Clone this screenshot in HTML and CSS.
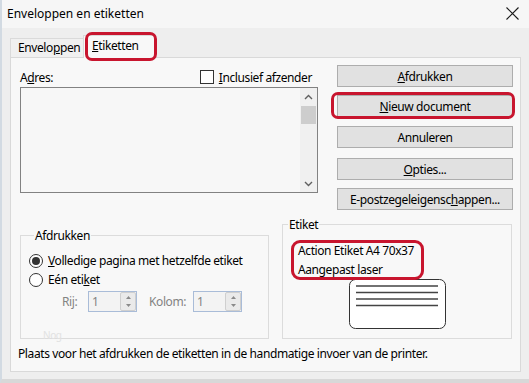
FILE: index.html
```html
<!DOCTYPE html>
<html lang="nl">
<head>
    <meta charset="UTF-8">
    <title>Enveloppen en etiketten</title>
    <link rel="stylesheet" href="styles.css">
</head>
<body>
    <div class="dialog">
        <!-- titelbalk -->
        <div class="titlebar">
            <span class="title">Enveloppen en etiketten</span>
            <svg class="close" width="13" height="13" viewBox="0 0 13 13">
                <path d="M0.5 0.5 L12.5 12.5 M12.5 0.5 L0.5 12.5" stroke="#1a1a1a" stroke-width="1.1" fill="none"/>
            </svg>
        </div>

        <!-- tabbladen -->
        <div class="tabs">
            <div class="tab">Envelo<u>p</u>pen</div>
            <div class="tab tab-active mark mark-tab"><u>E</u>tiketten</div>
        </div>

        <div class="panel">
            <div class="top">
                <div class="address">
                    <div class="address-head">
                        <span>A<u>d</u>res:</span>
                        <span class="check"><span class="box"></span><u>I</u>nclusief afzender</span>
                    </div>
                    <div class="textarea">
                        <div class="scrollbar">
                            <div class="arrow">
                                <svg width="9" height="6" viewBox="0 0 9 6"><path d="M1 5 L4.5 1.5 L8 5" stroke="#606060" stroke-width="1.4" fill="none"/></svg>
                            </div>
                            <div class="thumb"></div>
                            <div class="track"></div>
                            <div class="arrow">
                                <svg width="9" height="6" viewBox="0 0 9 6"><path d="M1 1 L4.5 4.5 L8 1" stroke="#606060" stroke-width="1.4" fill="none"/></svg>
                            </div>
                        </div>
                    </div>
                </div>

                <div class="actions">
                    <button class="btn"><u>A</u>fdrukken</button>
                    <button class="btn btn-new mark mark-btn"><u>N</u>ieuw document</button>
                    <button class="btn btn-cancel">Annuleren</button>
                    <button class="btn btn-options"><u>O</u>pties...</button>
                    <button class="btn btn-stamp">E-postzegeleigensc<u>h</u>appen...</button>
                </div>
            </div>

            <div class="bottom">
                <fieldset class="group group-print">
                    <legend>Afdrukken</legend>
                    <div class="radio-row">
                        <span class="radio radio-on"></span><span><u>V</u>olledige pagina met hetzelfde etiket</span>
                    </div>
                    <div class="radio-row">
                        <span class="radio"></span><span>Eén eti<u>k</u>et</span>
                    </div>
                    <div class="spin-row">
                        <span class="spin-label">Rij:</span>
                        <span class="spin">
                            <span class="spin-val">1</span>
                            <span class="spin-btns">
                                <span class="spin-btn"><svg width="5" height="3" viewBox="0 0 5 3"><path d="M0 3 L2.5 0 L5 3 Z" fill="#8a8a8a"/></svg></span>
                                <span class="spin-btn"><svg width="5" height="3" viewBox="0 0 5 3"><path d="M0 0 L2.5 3 L5 0 Z" fill="#8a8a8a"/></svg></span>
                            </span>
                        </span>
                        <span class="spin-label spin-label-col">Kolom:</span>
                        <span class="spin">
                            <span class="spin-val">1</span>
                            <span class="spin-btns">
                                <span class="spin-btn"><svg width="5" height="3" viewBox="0 0 5 3"><path d="M0 3 L2.5 0 L5 3 Z" fill="#8a8a8a"/></svg></span>
                                <span class="spin-btn"><svg width="5" height="3" viewBox="0 0 5 3"><path d="M0 0 L2.5 3 L5 0 Z" fill="#8a8a8a"/></svg></span>
                            </span>
                        </span>
                    </div>
                    <div class="ghost">Nog</div>
                </fieldset>

                <fieldset class="group group-label">
                    <legend>Etiket</legend>
                    <div class="label-name mark mark-label">
                        <div>Action Etiket A4 70x37</div>
                        <div>Aangepast laser</div>
                    </div>
                    <svg class="label-pic" width="97" height="50" viewBox="0 0 97 50">
                        <rect x="0.5" y="0.5" width="96" height="49" rx="6" ry="6" fill="#fff" stroke="#333" stroke-width="1"/>
                        <path d="M7 7 H89 M7 13.5 H89 M7 20 H89 M7 26.5 H89" stroke="#444" stroke-width="1.3"/>
                    </svg>
                </fieldset>
            </div>

            <p class="hint">Plaats voor het afdrukken de etiketten in de handmatige invoer van de printer.</p>
        </div>
    </div>
</body>
</html>
```

FILE: styles.css
```css
* {
    box-sizing: border-box;
}

body {
    margin: 0;
    font-family: "Noto Sans", "Open Sans", sans-serif;
    font-size: 12px;
    letter-spacing: -0.4px;
    color: #000;
    background: #f0f0f0;
}

u {
    text-decoration: underline;
    text-underline-offset: 1px;
}

.dialog {
    width: 529px;
    height: 383px;
    display: flex;
    flex-direction: column;
    background: #eeeeee;
    border-left: 2px solid #d2dae2;
    border-bottom: 4px solid #d8d8d8;
}

/* titelbalk */
.titlebar {
    height: 28px;
    flex: none;
    display: flex;
    align-items: center;
    justify-content: space-between;
    padding: 0 10px 2px 5px;
    background: #f6f6f6;
}

.title {
    letter-spacing: 0;
}

/* tabbladen */
.tabs {
    height: 29px;
    flex: none;
    display: flex;
    align-items: flex-end;
    padding-left: 8px;
}

.tab {
    width: 74px;
    height: 19px;
    padding-left: 7px;
    line-height: 18px;
    border: 1px solid #dadada;
    border-bottom: none;
    background: #f0f0f0;
}

.tab-active {
    width: 73px;
    height: 23px;
    margin-bottom: -1px;
    margin-left: -1px;
    padding-left: 8px;
    line-height: 20px;
    background: #f8f8f8;
    position: relative;
    z-index: 1;
}

/* rode markeringen */
.mark {
    position: relative;
}

.mark::after {
    content: "";
    position: absolute;
    border: 3px solid #c8152e;
    border-radius: 7px;
    pointer-events: none;
}

.mark-tab::after {
    left: 1px;
    right: -2px;
    top: -4px;
    bottom: -3px;
}

.mark-btn::after {
    left: -7px;
    right: -3px;
    top: -4px;
    bottom: -3px;
}

.mark-label::after {
    left: -7px;
    right: -10px;
    top: -1px;
    bottom: -1px;
    border-radius: 9px;
}

/* paneel */
.panel {
    width: 511px;
    height: 315px;
    margin-left: 8px;
    display: flex;
    flex-direction: column;
    background: #f8f8f8;
    border: 1px solid #d9d9d9;
}

.top {
    display: flex;
    padding: 7px 7px 0 9px;
}

.address {
    width: 298px;
    padding-top: 4px;
}

.address-head {
    height: 16px;
    margin-bottom: 2px;
    display: flex;
    align-items: center;
    justify-content: space-between;
    padding-right: 6px;
}

.check {
    display: flex;
    align-items: center;
}

.box {
    width: 14px;
    height: 14px;
    margin-right: 5px;
    border: 1px solid #333;
    background: #fff;
}

.textarea {
    height: 106px;
    display: flex;
    justify-content: flex-end;
    border: 1px solid #828282;
    background: #f7f7f7;
}

.scrollbar {
    width: 17px;
    display: flex;
    flex-direction: column;
    background: #f0f0f0;
}

.arrow {
    height: 17px;
    display: flex;
    align-items: center;
    justify-content: center;
}

.thumb {
    height: 18px;
    margin: 1px 1px 0;
    background: #cdcdcd;
}

.track {
    flex: 1;
}

.actions {
    width: 176px;
    margin-left: auto;
    display: flex;
    flex-direction: column;
}

.btn {
    height: 22px;
    padding: 0;
    font-family: inherit;
    font-size: 12px;
    letter-spacing: inherit;
    color: #000;
    background: #e1e1e1;
    border: 1px solid #adadad;
}

.btn-new {
    margin-top: 8px;
}

.btn-cancel {
    margin-top: 9px;
}

.btn-options {
    margin-top: 10px;
}

.btn-stamp {
    margin-top: 8px;
}

/* groepen */
.bottom {
    display: flex;
    align-items: flex-end;
    margin-top: 6px;
    padding-left: 9px;
}

.group {
    margin: 0;
    padding: 0;
    border: 1px solid #dcdcdc;
    display: flex;
    flex-direction: column;
}

.group legend {
    margin-left: 5px;
    padding: 0 1px;
}

.group-print {
    width: 249px;
    padding-left: 8px;
}

.group-label {
    width: 230px;
    margin-left: 13px;
    align-items: center;
    padding-bottom: 9px;
}

.radio-row {
    height: 19px;
    display: flex;
    align-items: center;
}

.radio-row:first-of-type {
    margin-top: 7px;
}

.radio {
    width: 14px;
    height: 14px;
    margin-right: 5px;
    border: 1px solid #333;
    border-radius: 50%;
    background: #fff;
    display: flex;
    align-items: center;
    justify-content: center;
}

.radio-on::before {
    content: "";
    width: 8px;
    height: 8px;
    border-radius: 50%;
    background: #333;
}

.spin-row {
    display: flex;
    align-items: center;
    margin-top: 2px;
    padding-left: 33px;
    color: #838383;
}

.spin-label {
    width: 26px;
}

.spin-label-col {
    width: 44px;
    margin-left: 12px;
}

.spin {
    width: 49px;
    height: 21px;
    display: flex;
    border: 1px solid #a9bcd8;
    background: #f3f3f3;
}

.spin-val {
    flex: 1;
    padding-left: 3px;
    line-height: 19px;
}

.spin-btns {
    width: 16px;
    display: flex;
    flex-direction: column;
    border: 1px solid #cfcfcf;
    border-radius: 2px;
    background: #eaeaea;
}

.spin-btn {
    flex: 1;
    display: flex;
    align-items: center;
    justify-content: center;
}

.ghost {
    margin: 17px 0 -3px 14px;
    height: 12px;
    font-size: 10px;
    line-height: 12px;
    color: #e2e2e2;
}

.label-name {
    align-self: flex-start;
    margin: 8px 0 0 15px;
    line-height: 19px;
}

.label-pic {
    margin-top: 0;
}

.hint {
    margin: 7px 0 0 7px;
    line-height: 16px;
}
```
